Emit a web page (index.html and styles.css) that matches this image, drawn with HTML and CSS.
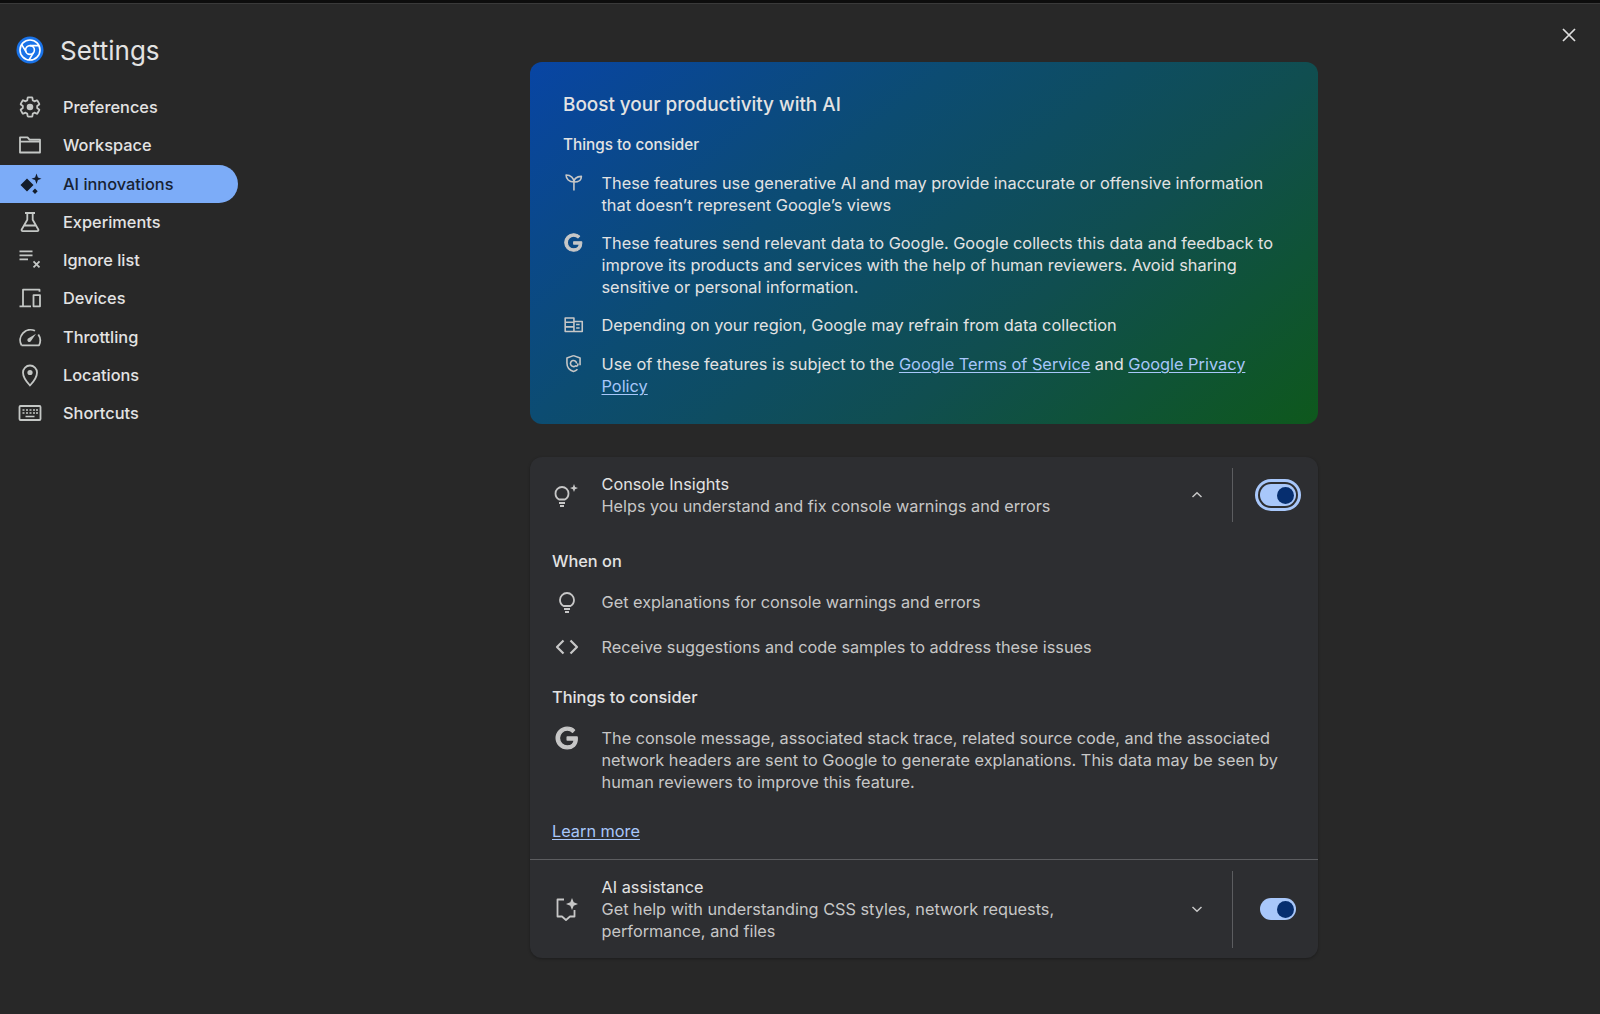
FILE: index.html
```html
<!DOCTYPE html>
<html lang="en">
<head>
<meta charset="utf-8">
<title>Settings</title>
<link rel="stylesheet" href="styles.css">
</head>
<body>
<div class="topline"></div>
<div class="shell">
  <aside class="sidebar">
    <header class="brand">
      <svg class="logo" viewBox="0 0 28 28"><circle cx="14" cy="14" r="13.5" fill="#1a73e8"/><g fill="none" stroke="#fff" stroke-width="1.6"><circle cx="14" cy="14" r="10"/><circle cx="14" cy="14" r="4.4"/><path d="M14 9.6h9.2M10.2 16.2 5.6 8.4M17.8 16.2 13 24"/></g></svg>
      <h1 class="brand-title">Settings</h1>
    </header>
    <nav class="nav">
      <a class="nav-item"><svg class="nav-icon" viewBox="0 0 24 24"><path class="ln" d="M19.14 12.94c.04-.3.06-.61.06-.94 0-.32-.02-.64-.07-.94l2.03-1.58c.18-.14.23-.41.12-.61l-1.92-3.32c-.12-.22-.37-.29-.59-.22l-2.39.96c-.5-.38-1.03-.7-1.62-.94L14.4 2.81c-.04-.24-.24-.41-.48-.41h-3.84c-.24 0-.43.17-.47.41l-.36 2.54c-.59.24-1.13.57-1.62.94l-2.39-.96c-.22-.08-.47 0-.59.22L2.74 8.87c-.12.21-.08.47.12.61l2.03 1.58c-.05.3-.09.63-.09.94s.02.64.07.94l-2.03 1.58c-.18.14-.23.41-.12.61l1.92 3.32c.12.22.37.29.59.22l2.39-.96c.5.38 1.03.7 1.62.94l.36 2.54c.05.24.24.41.48.41h3.84c.24 0 .44-.17.47-.41l.36-2.54c.59-.24 1.13-.56 1.62-.94l2.39.96c.22.08.47 0 .59-.22l1.92-3.32c.12-.22.07-.47-.12-.61z"/><circle class="fl" cx="12" cy="12" r="3.3"/></svg><span>Preferences</span></a>
      <a class="nav-item"><svg class="nav-icon" viewBox="0 0 24 24"><path class="ln" d="M2 19.500V4.300h7.500l2 2.400H22v12.800zM2 8.700h20"/></svg><span>Workspace</span></a>
      <a class="nav-item is-active"><svg class="nav-icon" viewBox="0 0 24 24"><path class="fl" d="M9 6.500 15.500 13 9 19.500 2.500 13zM18.500 1.500l1.400 3.900 3.600 1.300-3.600 1.400-1.400 3.900-1.400-3.900-3.600-1.400 3.600-1.300zM17 16.500l2.700 2.700-2.700 2.700-2.700-2.700z"/></svg><span>AI innovations</span></a>
      <a class="nav-item"><svg class="nav-icon" viewBox="0 0 24 24"><path class="ln" d="M7 3h10M9.300 3v6.800L3.700 19.500c-.4.800.1 1.700 1 1.700h14.600c.9 0 1.400-.9 1-1.700l-5.600-9.700V3M6.500 15.500h11"/></svg><span>Experiments</span></a>
      <a class="nav-item"><svg class="nav-icon" viewBox="0 0 24 24"><path class="ln" d="M1.500 3.300h13M1.500 7.300h13M1.500 11.300h8.500M15.500 13.300l6 6M21.500 13.300l-6 6"/></svg><span>Ignore list</span></a>
      <a class="nav-item"><svg class="nav-icon" viewBox="0 0 24 24"><path class="ln" d="M21.500 5.700V3.700H5V19.500M1.500 20.300H13M15.500 9.200h6.500V20.300h-6.500z"/></svg><span>Devices</span></a>
      <a class="nav-item"><svg class="nav-icon" viewBox="0 0 24 24"><path class="ln" d="M3.500 20.300a10.400 10.400 0 0 1 13.500-14.500M20.300 9.500a10.400 10.400 0 0 1 .7 10.800H3.500"/><path class="fl" d="M10.500 13.200 18 8.700l-4.800 7.100a2 2 0 1 1-2.700-2.600z"/></svg><span>Throttling</span></a>
      <a class="nav-item"><svg class="nav-icon" viewBox="0 0 24 24"><path class="ln" d="M12 22.500s-7-7.300-7-13a7 7 0 0 1 14 0c0 5.700-7 13-7 13z"/><circle class="fl" cx="12" cy="9.500" r="2.600"/></svg><span>Locations</span></a>
      <a class="nav-item"><svg class="nav-icon" viewBox="0 0 24 24"><rect class="ln" x="1.500" y="5" width="21" height="14" rx="1"/><path class="dots" d="M4.500 9h2M8 9h2M11.500 9h2M15 9h2M18 9h2M4.500 12h2M8 12h2M11.500 12h2M15 12h2M18 12h2M7.500 15.500h9"/></svg><span>Shortcuts</span></a>
    </nav>
  </aside>

  <main class="content">
    <section class="hero">
      <h2 class="hero-title">Boost your productivity with AI</h2>
      <h3 class="hero-sub">Things to consider</h3>
      <ul class="hero-list">
        <li class="hero-row"><svg class="row-icon" viewBox="0 0 24 24"><path class="ln" d="M12.500 21V11.500M12.500 11.500C12.500 7 9 3.500 3.500 3.500c0 4.500 3.500 8 9 8zM12.500 11.500c0-2 1-6 8.500-6.500 0 4-3 6.500-8.500 6.500z"/></svg><p>These features use generative AI and may provide inaccurate or offensive information that doesn’t represent Google’s views</p></li>
        <li class="hero-row"><svg class="row-icon" viewBox="0 0 24 24"><path class="fl bold" d="M21.350 11.100h-9.170v2.730h6.510c-.33 3.810-3.500 5.440-6.500 5.440C8.360 19.270 5 16.250 5 12c0-4.100 3.200-7.270 7.200-7.270 3.090 0 4.900 1.970 4.900 1.970L19 4.720S16.560 2 12.100 2C6.420 2 2.030 6.800 2 12c0 5.050 4.160 10 10.220 10 5.330 0 9.230-3.650 9.230-9.050 0-1.140-.1-1.850-.1-1.850z"/></svg><p>These features send relevant data to Google. Google collects this data and feedback to improve its products and services with the help of human reviewers. Avoid sharing sensitive or personal information.</p></li>
        <li class="hero-row"><svg class="row-icon" viewBox="0 0 24 24"><path class="ln" d="M2.500 20V4.500h10V20zM12.500 8.500h9.500V20H2.500M2.500 9.500h10M2.500 14.700h10M15 12h4M15 16h4"/></svg><p>Depending on your region, Google may refrain from data collection</p></li>
        <li class="hero-row last"><svg class="row-icon" viewBox="0 0 24 24"><path class="ln" d="M12 3 4.500 5.800v5.700c0 4.700 3 8.300 7.500 9.700 1.800-.5 3.400-1.500 4.500-2.700M19.500 14v-8.200L12 3"/><path class="ln" d="M15.500 12a3.500 3.500 0 1 0-1.200 2.700c.7.500 2.700.6 2.700-1.500V12"/></svg><p>Use of these features is subject to the <a class="link" href="#">Google Terms of Service</a> and <a class="link" href="#">Google Privacy</a> <a class="link" href="#">Policy</a></p></li>
      </ul>
    </section>

    <section class="panel">
      <div class="feature">
        <svg class="feature-icon" viewBox="0 0 28 28"><path class="ln" d="M7 22h6M8 25h4M7 18.500C4.800 17.200 3.500 15 3.500 12.500a6.500 6.500 0 0 1 13 0c0 2.500-1.300 4.700-3.500 6z"/><path class="fl" d="M22 3l1.100 3 2.900 1.100-2.900 1.100L22 11l-1.100-2.800L18 7.100l2.900-1.100z"/></svg>
        <div class="feature-text"><div class="feature-name">Console Insights</div><div class="feature-desc">Helps you understand and fix console warnings and errors</div></div>
        <svg class="chevron" viewBox="0 0 14 14"><path d="M2.500 9 7 4.800 11.500 9"/></svg>
        <div class="vrule"></div>
        <div class="toggle is-focus"><span class="knob"></span></div>
      </div>
      <div class="details">
        <h4 class="details-head">When on</h4>
        <div class="detail-row first"><svg class="detail-icon" viewBox="0 0 24 24"><path class="ln" d="M9 19h6M10 22h4M8.500 16C6.300 14.700 5 12.500 5 10a7 7 0 0 1 14 0c0 2.500-1.300 4.700-3.500 6z"/></svg><p>Get explanations for console warnings and errors</p></div>
        <div class="detail-row"><svg class="detail-icon" viewBox="0 0 24 24"><path class="ln wide" d="M8.500 5.500 2 12l6.500 6.500M15.500 5.500 22 12l-6.500 6.500"/></svg><p>Receive suggestions and code samples to address these issues</p></div>
        <h4 class="details-head second">Things to consider</h4>
        <div class="detail-row top"><svg class="detail-icon big" viewBox="0 0 24 24"><path class="fl bold" d="M21.350 11.100h-9.170v2.730h6.510c-.33 3.810-3.500 5.440-6.500 5.440C8.360 19.270 5 16.250 5 12c0-4.100 3.200-7.270 7.200-7.270 3.090 0 4.900 1.970 4.900 1.970L19 4.720S16.560 2 12.100 2C6.420 2 2.030 6.800 2 12c0 5.050 4.160 10 10.220 10 5.330 0 9.230-3.650 9.230-9.050 0-1.140-.1-1.850-.1-1.850z"/></svg><p>The console message, associated stack trace, related source code, and the associated network headers are sent to Google to generate explanations. This data may be seen by human reviewers to improve this feature.</p></div>
        <a class="link learn" href="#">Learn more</a>
      </div>
      <div class="feature second">
        <svg class="feature-icon" viewBox="0 0 28 28"><path class="ln" d="M12 4.500H5.500v17H10l4 3.500 4-3.500h4.500V15"/><path class="fl" d="M20 3l1.700 4.300L26 9l-4.300 1.700L20 15l-1.700-4.300L14 9l4.300-1.700z"/></svg>
        <div class="feature-text"><div class="feature-name">AI assistance</div><div class="feature-desc narrow">Get help with understanding CSS styles, network requests, performance, and files</div></div>
        <svg class="chevron" viewBox="0 0 14 14"><path d="M2.500 5 7 9.200 11.500 5"/></svg>
        <div class="vrule"></div>
        <div class="toggle"><span class="knob"></span></div>
      </div>
    </section>
  </main>

  <button class="close" aria-label="Close"><svg viewBox="0 0 14 14"><path d="M1 1l12 12M13 1 1 13"/></svg></button>
</div>
</body>
</html>
```

FILE: styles.css
```css
* { box-sizing: border-box; }
html, body { margin: 0; height: 100%; overflow: hidden; }
body {
  background: #282828;
  color: #e3e3e3;
  font-family: Inter, "Liberation Sans", sans-serif;
  font-size: 16.35px;
  line-height: 22px;
}
h1, h2, h3, h4, p, ul { margin: 0; padding: 0; }
ul { list-style: none; }

.topline { height: 4px; background: #0d0d0d; border-bottom: 1px solid #3a3a3a; }
.shell { display: flex; align-items: flex-start; }

.ln { fill: none; stroke: currentColor; stroke-width: 1.8; stroke-linejoin: round; }
.fl { fill: currentColor; }
.bold { stroke: currentColor; stroke-width: 1.3; stroke-linejoin: round; }
.dots { fill: none; stroke: currentColor; stroke-width: 1.7; }
.wide { stroke-width: 2.2; }

/* Sidebar */
.sidebar { width: 238px; flex: none; }
.brand { display: flex; align-items: flex-start; gap: 16px; padding: 32px 0 0 16px; height: 84px; }
.logo { width: 28px; height: 28px; flex: none; }
.brand-title { font-size: 26px; line-height: 32px; font-weight: 400; color: #e3e3e3; margin-top: -1px; }
.nav { display: flex; flex-direction: column; }
.nav-item { display: flex; align-items: center; height: 38.25px; padding-left: 18px; gap: 21px; font-weight: 500; color: #e3e3e3; }
.nav-icon { width: 24px; height: 24px; flex: none; color: #c4c7c5; }
.is-active { background: #7cacf8; color: #172233; border-radius: 0 20px 20px 0; }
.is-active .nav-icon { color: #141d2b; }

/* Main */
.content { width: 788px; flex: none; margin-left: 292px; padding-top: 58px; }
.hero {
  height: 362px;
  padding: 31px 33px 0;
  border-radius: 12px;
  background: linear-gradient(140deg, #0845a4 0%, #0c4c72 35%, #104e50 65%, #0e581c 100%);
}
.hero-title { font-size: 18.9px; line-height: 24px; font-weight: 500; }
.hero-sub { font-size: 15.3px; line-height: 22px; font-weight: 500; margin-top: 17px; }
.hero-list { margin-top: 15.6px; display: flex; flex-direction: column; gap: 16px; font-size: 16.34px; }
.hero-row { display: flex; gap: 17.5px; }
.hero-row.last { margin-top: 1.8px; }
.hero-row p { flex: 1; }
.row-icon { width: 21px; height: 21px; flex: none; color: #c7c7c7; }

.link { color: #a8c7fa; text-decoration: underline; text-underline-offset: 2px; }

.panel { margin-top: 33px; background: #2d2e31; border-radius: 12px; box-shadow: 0 1px 3px rgba(0, 0, 0, .3); font-size: 16.3px; }
.feature { display: flex; align-items: center; padding-left: 22px; height: 76px; }
.feature.second { height: 99px; border-top: 1px solid #5c5d60; }
.feature-icon { width: 28px; height: 28px; flex: none; color: #c7c7c7; }
.feature-text { flex: 1; margin-left: 21.5px; }
.feature-name { color: #e3e3e3; }
.feature-desc { color: #c7c7c7; font-size: 16.24px; }
.narrow { width: 470px; font-size: 16.3px; }
.chevron { width: 14px; height: 14px; flex: none; fill: none; stroke: #c7c7c7; stroke-width: 1.5; margin-right: 28px; }
.vrule { width: 1px; height: 54px; background: #5c5d60; flex: none; }
.second .vrule { height: 77px; }
.toggle {
  width: 36px; height: 22px; flex: none; margin: 0 22px 0 27px;
  border-radius: 11px; background: #a8c7fa;
  display: flex; align-items: center; justify-content: flex-end; padding-right: 2.5px;
}
.toggle.is-focus { box-shadow: 0 0 0 2px #2d2e31, 0 0 0 5px #a8c7fa; }
.knob { width: 17px; height: 17px; border-radius: 50%; background: #062e6f; }

.details { padding: 0 34px 0 22px; }
.details-head { font-size: 16.35px; line-height: 22px; font-weight: 500; color: #e3e3e3; margin-top: 17px; }
.details-head.second { margin-top: 17.3px; }
.detail-row { display: flex; align-items: center; height: 45px; color: #c7c7c7; }
.detail-row.first { margin-top: 7px; }
.detail-row.top { align-items: flex-start; height: auto; margin-top: 19px; }
.detail-icon { width: 24px; height: 24px; flex: none; margin: 0 23px 0 2.5px; color: #c7c7c7; }
.detail-icon.big { width: 26px; height: 26px; margin: -2px 22px 0 1.5px; }
.detail-row p { flex: 1; }
.learn { display: block; margin-top: 27px; height: 39px; }

.close { position: absolute; top: 27px; right: 22px; width: 16px; height: 16px; padding: 0; background: none; border: 0; }
.close svg { display: block; width: 14px; height: 14px; fill: none; stroke: #dedede; stroke-width: 1.7; }
```
